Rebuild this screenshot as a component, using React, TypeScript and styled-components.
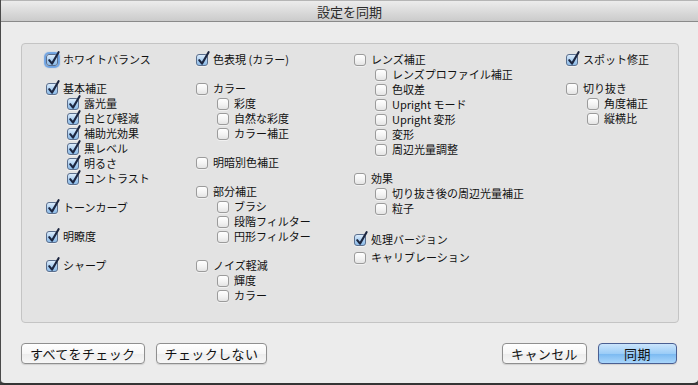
import styled, { createGlobalStyle } from "styled-components";

const GlobalStyle = createGlobalStyle`
  html, body {
    margin: 0;
    padding: 0;
    background: #3d3d3d;
  }
  body {
    font-family: "Noto Sans CJK JP", "Noto Sans", sans-serif;
    color: #111;
  }
`;

interface Item {
  label: string;
  checked?: boolean;
  sub?: boolean;
  focus?: boolean;
}

interface Group {
  space: number;
  items: Item[];
}

const columns: Group[][] = [
  [
    { space: 0, items: [{ label: "ホワイトバランス", checked: true, focus: true }] },
    {
      space: 14,
      items: [
        { label: "基本補正", checked: true },
        { label: "露光量", checked: true, sub: true },
        { label: "白とび軽減", checked: true, sub: true },
        { label: "補助光効果", checked: true, sub: true },
        { label: "黒レベル", checked: true, sub: true },
        { label: "明るさ", checked: true, sub: true },
        { label: "コントラスト", checked: true, sub: true },
      ],
    },
    { space: 14, items: [{ label: "トーンカーブ", checked: true }] },
    { space: 14, items: [{ label: "明瞭度", checked: true }] },
    { space: 14, items: [{ label: "シャープ", checked: true }] },
  ],
  [
    { space: 0, items: [{ label: "色表現 (カラー)", checked: true }] },
    {
      space: 14,
      items: [
        { label: "カラー" },
        { label: "彩度", sub: true },
        { label: "自然な彩度", sub: true },
        { label: "カラー補正", sub: true },
      ],
    },
    { space: 14, items: [{ label: "明暗別色補正" }] },
    {
      space: 14,
      items: [
        { label: "部分補正" },
        { label: "ブラシ", sub: true },
        { label: "段階フィルター", sub: true },
        { label: "円形フィルター", sub: true },
      ],
    },
    {
      space: 14,
      items: [
        { label: "ノイズ軽減" },
        { label: "輝度", sub: true },
        { label: "カラー", sub: true },
      ],
    },
  ],
  [
    {
      space: 0,
      items: [
        { label: "レンズ補正" },
        { label: "レンズプロファイル補正", sub: true },
        { label: "色収差", sub: true },
        { label: "Upright モード", sub: true },
        { label: "Upright 変形", sub: true },
        { label: "変形", sub: true },
        { label: "周辺光量調整", sub: true },
      ],
    },
    {
      space: 14,
      items: [
        { label: "効果" },
        { label: "切り抜き後の周辺光量補正", sub: true },
        { label: "粒子", sub: true },
      ],
    },
    { space: 16, items: [{ label: "処理バージョン", checked: true }] },
    { space: 3, items: [{ label: "キャリブレーション" }] },
  ],
  [
    { space: 0, items: [{ label: "スポット修正", checked: true }] },
    {
      space: 14,
      items: [
        { label: "切り抜き" },
        { label: "角度補正", sub: true },
        { label: "縦横比", sub: true },
      ],
    },
  ],
];

const Window = styled.div`
  width: 698px;
  height: 385px;
  box-sizing: border-box;
  background: #ececec;
  border-left: 1px solid #4a4a4a;
  border-bottom: 2px solid #353535;
  border-radius: 0 0 5px 5px;
  display: flex;
  flex-direction: column;
  overflow: hidden;
`;

const TitleBar = styled.div`
  height: 22px;
  flex: none;
  box-sizing: border-box;
  border-top: 1px solid #b5b5b5;
  border-bottom: 1px solid #8a8a8a;
  background: linear-gradient(#ececec, #cbcbcb);
  display: flex;
  align-items: center;
  justify-content: center;
  font-size: 13px;
  color: #2b2b2b;
`;

const Body = styled.div`
  padding: 21px 19px 0 20px;
  display: flex;
  flex-direction: column;
`;

const GroupBox = styled.div`
  height: 280px;
  box-sizing: border-box;
  border: 1px solid #c4c4c4;
  border-radius: 4px;
  background: #e3e3e3;
  padding: 8px 0 0 24px;
  display: grid;
  grid-template-columns: 150px 158px 212px 1fr;
  align-items: start;
`;

const Column = styled.div`
  display: flex;
  flex-direction: column;
`;

const GroupList = styled.div<{ $space: number }>`
  display: flex;
  flex-direction: column;
  margin-top: ${(p) => p.$space}px;
`;

const Row = styled.label<{ $sub?: boolean }>`
  height: 15px;
  display: flex;
  align-items: center;
  padding-left: ${(p) => (p.$sub ? 21 : 0)}px;
  font-size: 11px;
  line-height: 15px;
  white-space: nowrap;
`;

const Box = styled.span<{ $checked?: boolean; $focus?: boolean }>`
  position: relative;
  width: 12px;
  height: 12px;
  flex: none;
  box-sizing: border-box;
  margin-right: 5px;
  border-radius: 3px;
  border: 1px solid ${(p) => (p.$checked ? "#5b6f8e" : "#9b9b9b")};
  background: ${(p) =>
    p.$checked
      ? "linear-gradient(#dcecfb, #a9cdf0 55%, #8fbde9)"
      : "linear-gradient(#ffffff, #f3f3f3 55%, #e4e4e4)"};
  box-shadow: ${(p) =>
    p.$focus ? "0 0 1px 2px rgba(70, 140, 225, 0.75)" : "0 1px 0 rgba(255,255,255,0.5)"};
`;

const Tick = styled.svg`
  position: absolute;
  left: 0;
  top: -4px;
  width: 13px;
  height: 15px;
  overflow: visible;
`;

const Footer = styled.div`
  display: flex;
  justify-content: space-between;
  margin-top: 20px;
  padding-right: 2px;
`;

const ButtonGroup = styled.div`
  display: flex;
  gap: 11px;
`;

const Button = styled.button<{ $primary?: boolean }>`
  height: 21px;
  min-width: 79px;
  box-sizing: border-box;
  padding: 0 8px;
  border-radius: 4px;
  font-family: "Noto Sans CJK JP", "Noto Sans", sans-serif;
  font-size: 13px;
  letter-spacing: 0.4px;
  line-height: 19px;
  color: #111;
  border: 1px solid ${(p) => (p.$primary ? "#4a5f92" : "#8f8f8f")};
  background: ${(p) =>
    p.$primary
      ? "linear-gradient(#cbe5fc, #9ccdf7 50%, #7ab9f1 52%, #a9d6fb)"
      : "linear-gradient(#ffffff, #f6f6f6 50%, #ececec 52%, #f7f7f7)"};
  box-shadow: 0 1px 1px rgba(0, 0, 0, 0.12);
`;

const CheckBox = ({ checked, focus }: { checked?: boolean; focus?: boolean }) => (
  <Box $checked={checked} $focus={focus}>
    {checked && (
      <Tick viewBox="0 0 13 15">
        <path
          d="M2.2 9.2 L5 12.6 L11.6 1.2"
          fill="none"
          stroke="#1c2640"
          strokeWidth="2.1"
          strokeLinecap="round"
          strokeLinejoin="round"
        />
      </Tick>
    )}
  </Box>
);

export default function App() {
  return (
    <>
      <GlobalStyle />
      <Window>
        <TitleBar>設定を同期</TitleBar>
        <Body>
          <GroupBox>
            {columns.map((groups, ci) => (
              <Column key={ci}>
                {groups.map((g, gi) => (
                  <GroupList key={gi} $space={g.space}>
                    {g.items.map((it) => (
                      <Row key={it.label} $sub={it.sub}>
                        <CheckBox checked={it.checked} focus={it.focus} />
                        {it.label}
                      </Row>
                    ))}
                  </GroupList>
                ))}
              </Column>
            ))}
          </GroupBox>
          <Footer>
            <ButtonGroup>
              <Button>すべてをチェック</Button>
              <Button>チェックしない</Button>
            </ButtonGroup>
            <ButtonGroup>
              <Button>キャンセル</Button>
              <Button $primary>同期</Button>
            </ButtonGroup>
          </Footer>
        </Body>
      </Window>
    </>
  );
}
